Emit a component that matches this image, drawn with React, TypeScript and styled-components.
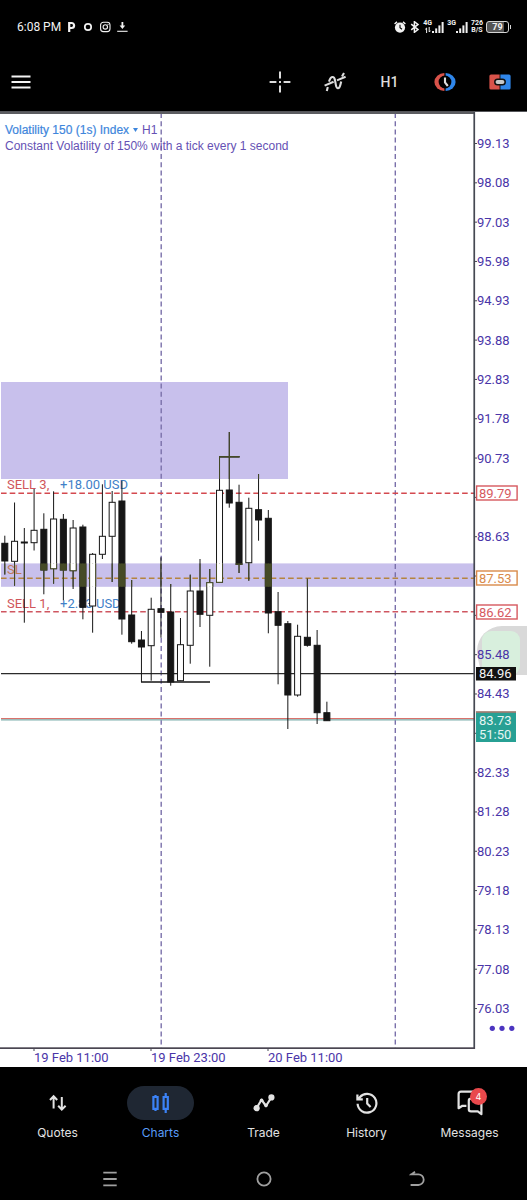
import React from "react";
import styled, { createGlobalStyle } from "styled-components";

const ui = `Inter, "Liberation Sans", sans-serif`;
const heading = `"Liberation Sans", Arial, sans-serif`;
const digits = `Roboto, "Liberation Sans", sans-serif`;
const violet = "#4a35a8";

const GlobalStyle = createGlobalStyle`
  *, *::before, *::after { box-sizing: border-box; }
  body { margin: 0; background: #000; font-family: ${ui}; }
  button { border: 0; padding: 0; margin: 0; background: none; color: inherit; font: inherit; cursor: pointer; }
  svg { display: block; }
`;

const Screen = styled.main`
  display: flex;
  flex-direction: column;
  width: 100%;
  min-height: 100vh;
  background: #000;
`;

const StatusBar = styled.header`
  display: flex;
  justify-content: space-between;
  align-items: center;
  height: 53px;
  padding: 0 18px 0 17px;
  color: #f2f2f2;
`;

const StatusGroup = styled.div<{ $gap: number }>`
  display: flex;
  align-items: center;
  gap: ${(p) => p.$gap}px;
`;

const Clock = styled.time`
  font: 400 12px/16px ${digits};
`;

const Network = styled.div`
  display: flex;
  align-items: flex-end;
`;

const TinyStack = styled.div`
  display: flex;
  flex-direction: column;
  align-items: center;
  font: 700 7px/7px ${digits};
`;

const Battery = styled.div`
  position: relative;
  display: flex;
  align-items: center;
  justify-content: center;
  width: 23px;
  height: 12px;
  border: 1px solid #d5d5d5;
  border-radius: 3px;
  background: linear-gradient(90deg, #555 79%, #000 79%);
  font: 700 9px/10px ${digits};
  &::after {
    content: "";
    position: absolute;
    right: -3px;
    top: 3px;
    width: 1px;
    height: 4px;
    background: #d5d5d5;
  }
`;

const Toolbar = styled.nav`
  display: flex;
  justify-content: space-between;
  height: 58px;
  color: #dcdcdc;
`;

const ToolGroup = styled.div`
  display: flex;
`;

const ToolButton = styled.button<{ $width: number }>`
  display: flex;
  align-items: center;
  justify-content: center;
  width: ${(p) => p.$width}px;
  height: 58px;
  font: 500 14px/18px ${digits};
`;

const ChartPanel = styled.section`
  position: relative;
  background: #fff;
`;

const ChartSvg = styled.svg`
  width: 100%;
  height: auto;
  font: 400 13px ${digits};
`;

const ChartHeading = styled.div`
  position: absolute;
  top: 11px;
  left: 5px;
  color: #6551b4;
  font: 400 12px/16px ${heading};
  white-space: nowrap;
`;

const HeadingRow = styled.div`
  display: flex;
  align-items: center;
  gap: 4px;
`;

const SymbolButton = styled.button`
  display: flex;
  align-items: center;
  gap: 4px;
  color: #3e86dc;
  -webkit-text-stroke: 0.2px currentColor;
`;

const TabBar = styled.nav`
  display: flex;
  padding: 19px 6px 0;
  height: 91px;
`;

const Tab = styled.button<{ $active?: boolean }>`
  flex: 1;
  display: flex;
  flex-direction: column;
  align-items: center;
  gap: 5px;
  height: 56px;
  color: ${(p) => (p.$active ? "#5a9cf8" : "#e2e2e2")};
  font-size: 12px;
  line-height: 16px;
`;

const Pill = styled.span<{ $active?: boolean }>`
  position: relative;
  display: flex;
  align-items: center;
  justify-content: center;
  width: 67px;
  height: 34px;
  border-radius: 17px;
  background: ${(p) => (p.$active ? "#1f2733" : "transparent")};
`;

const Badge = styled.span`
  position: absolute;
  top: 2px;
  right: 16px;
  width: 17px;
  height: 17px;
  border-radius: 50%;
  background: #e9494c;
  color: #fff;
  font-size: 9px;
  line-height: 17px;
  text-align: center;
`;

const SystemNav = styled.nav`
  display: flex;
  padding: 0 33px;
  height: 42px;
`;

const SystemButton = styled.button`
  flex: 1;
  display: flex;
  align-items: center;
  justify-content: center;
  color: #a0a0a0;
`;

type Candle = { high: number; top: number; bottom: number; low: number; up?: boolean };

const up = (high: number, top: number, bottom: number, low: number): Candle => ({ high, top, bottom, low, up: true });
const down = (high: number, top: number, bottom: number, low: number): Candle => ({ high, top, bottom, low });

const candles: Candle[] = [
  down(535.7, 543.3, 561, 574.5),
  up(502.5, 541.3, 561.3, 585.7),
  down(528, 542, 543, 622.7),
  up(489, 530.3, 542.7, 550.5),
  down(513.3, 529.3, 570, 594.3),
  up(491.3, 519, 568.7, 583.7),
  down(514, 519.3, 570, 600.3),
  up(520, 528, 570.7, 589),
  down(524.7, 527, 607.3, 619.3),
  up(553, 554.3, 606, 632.7),
  up(484.3, 536.3, 554.3, 559),
  up(491, 502.3, 536.3, 582),
  down(480.7, 501, 619, 634.7),
  down(580, 615, 641.7, 643.7),
  down(631, 640, 647, 682),
  up(597.7, 609.3, 645.7, 680.7),
  down(557.3, 608.7, 612.3, 637.7),
  down(584, 612, 682, 685.7),
  up(618, 644.7, 680.7, 681),
  up(574.7, 591, 645.3, 663.7),
  down(559, 591, 614.3, 627),
  up(569, 582.7, 615.3, 666.7),
  up(456.7, 490.3, 582.3, 582.3),
  down(432, 490, 503, 507.7),
  down(484.7, 502.3, 564.3, 573),
  up(497.7, 508.3, 562.7, 580.7),
  down(474, 509.7, 520, 540.7),
  down(510, 518.3, 613, 633.3),
  down(592, 611.7, 625.3, 684.3),
  down(621, 623.7, 695, 729),
  up(624.7, 636.3, 695, 696.7),
  down(578.7, 637.3, 645.3, 646.7),
  down(630, 645.3, 712.7, 724),
  down(701.7, 712.7, 720.7, 720.7),
];

const priceTicks = Array.from({ length: 23 }, (_, i) => ({
  label: (99.13 - i * 1.05).toFixed(2),
  y: 143.5 + i * 39.32,
}));

// Scale labels that sit behind an order or quote tag are left out.
const coveredLabels = new Set(["89.68", "87.58", "86.53", "83.38"]);

const timeTicks = [
  { x: 34, label: "19 Feb 11:00" },
  { x: 151, label: "19 Feb 23:00" },
  { x: 268, label: "20 Feb 11:00" },
];

const orderTags = [
  { y: 493, label: "89.79", color: "#d6595f" },
  { y: 578, label: "87.53", color: "#d98a4a" },
  { y: 612, label: "86.62", color: "#d6595f" },
];

function Candles({ ink }: { ink: string }) {
  return (
    <g stroke={ink}>
      {candles.map((c, i) => {
        const x = 4.8 + i * 9.76;
        return (
          <g key={i}>
            <line x1={x} x2={x} y1={c.high} y2={c.low} strokeWidth="1" />
            <rect
              x={x - 3}
              y={c.top}
              width="6"
              height={c.bottom - c.top}
              fill={c.up ? "#fff" : ink}
              strokeWidth="1"
            />
          </g>
        );
      })}
      <path d="M141 682H210M219 456.7H239.6" strokeWidth="1.6" />
    </g>
  );
}

function Chart() {
  return (
    <ChartSvg viewBox="0 111 527 956" role="img" aria-label="Volatility 150 (1s) Index candlestick chart">
      <defs>
        <clipPath id="zones">
          <rect x="1" y="382" width="287" height="97" />
          <rect x="1" y="563.4" width="473" height="23.4" />
        </clipPath>
      </defs>
      <rect x="1" y="382" width="287" height="97" fill="#c8c0ec" />
      <rect x="1" y="563.4" width="473" height="23.4" fill="#c8c0ec" />

      <g stroke="#7a70aa" strokeWidth="1.4" strokeDasharray="5 3.2">
        <line x1="161.2" x2="161.2" y1="113" y2="1048" />
        <line x1="395.3" x2="395.3" y1="113" y2="1048" />
      </g>

      <g strokeWidth="1.5" strokeDasharray="5.6 3.1">
        <line x1="1" x2="474" y1="493.3" y2="493.3" stroke="#d4494f" />
        <line x1="1" x2="474" y1="578.2" y2="578.2" stroke="#b5843f" />
        <line x1="1" x2="474" y1="611.8" y2="611.8" stroke="#cf5660" />
      </g>
      <line x1="1" x2="474" y1="673.6" y2="673.6" stroke="#2b2b2b" strokeWidth="1.2" />
      <line x1="1" x2="474" y1="718.6" y2="718.6" stroke="#d9726c" strokeWidth="1.3" />
      <line x1="1" x2="474" y1="719.9" y2="719.9" stroke="#7fb0ae" strokeWidth="1.3" />

      <g fill="#d0565a">
        <text x="7" y="489">SELL 3,</text>
        <text x="7" y="574" fill="#c07a55">SL</text>
        <text x="7" y="608">SELL 1,</text>
      </g>
      <g fill="#3f80c8">
        <text x="60" y="489">+18.00 USD</text>
        <text x="60" y="608">+2.83 USD</text>
      </g>

      <Candles ink="#161616" />
      <g clipPath="url(#zones)">
        <Candles ink="#454a26" />
      </g>

      <path d="M527 626H502A25 25 0 0 0 477 651Q478 666 484 675H527Z" fill="#d9d9d9" />
      <rect x="482" y="631" width="38" height="44" rx="9" fill="#d8efdd" />

      <rect x="0" y="111" width="527" height="1" fill="#55565a" />
      <rect x="0" y="112" width="475" height="2" fill="#5c5d61" />
      <rect x="473.4" y="112" width="1.7" height="937" fill="#454852" />
      <rect x="0" y="1047.3" width="475" height="1.7" fill="#4a4652" />

      <g fill={violet}>
        {priceTicks.map((t) => (
          <g key={t.label}>
            <rect x="475" y={t.y - 0.5} width="2" height="1" fill="#454852" />
            {!coveredLabels.has(t.label) && <text x="477" y={t.y + 4.5}>{t.label}</text>}
          </g>
        ))}
        {timeTicks.map((t) => (
          <g key={t.x}>
            <rect x={t.x - 0.5} y="1049" width="1" height="2" fill="#454852" />
            <text x={t.x} y="1061.5">{t.label}</text>
          </g>
        ))}
        <g fill="#4c35c0">
          <circle cx="492.3" cy="1028.3" r="2.6" />
          <circle cx="502" cy="1028.3" r="2.6" />
          <circle cx="511.8" cy="1028.3" r="2.6" />
        </g>
      </g>

      {orderTags.map((t) => (
        <g key={t.label}>
          <rect x="476.6" y={t.y - 7} width="40.5" height="14" fill="#fff" stroke={t.color} strokeWidth="1.4" />
          <text x="479" y={t.y + 4.6} fill={t.color}>{t.label}</text>
        </g>
      ))}
      <rect x="476" y="667" width="40" height="13.5" fill="#111" />
      <text x="479" y="678" fill="#f4f4f4">84.96</text>
      <rect x="476" y="711.4" width="40" height="30.6" fill="#27a094" />
      <rect x="476" y="711.4" width="40" height="1.2" fill="#cf6f66" />
      <text x="479" y="724.5" fill="#e6f5f3">83.73</text>
      <text x="479" y="739" fill="#e6f5f3">51:50</text>
    </ChartSvg>
  );
}

function SignalBars() {
  return (
    <svg width="12" height="12" viewBox="0 0 12 12" fill="#f0f0f0" aria-hidden="true">
      <rect x="0" y="10" width="2" height="2" />
      <rect x="3.2" y="7.4" width="2" height="4.6" />
      <rect x="6.4" y="4.4" width="2" height="7.6" />
      <rect x="9.6" y="1" width="2" height="11" />
    </svg>
  );
}

const QuotesIcon = () => (
  <svg width="20" height="20" viewBox="0 0 20 20" fill="none" stroke="currentColor" strokeWidth="2">
    <path d="M5.6 15.4V3.2M2 7 5.6 3.2 9.2 7M13.8 4V16.4M10.2 12.8 13.8 16.6 17.6 12.8" />
  </svg>
);

const ChartsIcon = () => (
  <svg width="20" height="22" viewBox="0 0 20 22" fill="none" stroke="#3b82f6" strokeWidth="2.2">
    <path d="M2.4 5H6.6V16.8H2.4ZM4.5 3V5M4.5 16.8V19M12.6 5H16.8V16.8H12.6ZM14.7 1V5M14.7 16.8V21" />
  </svg>
);

const TradeIcon = () => (
  <svg width="22" height="22" viewBox="0 0 22 22" fill="none" stroke="currentColor" strokeWidth="2.2" strokeLinejoin="round">
    <path d="M3.6 16 8.6 7.8 13 14 18 6" />
    <g fill="currentColor" stroke="none">
      <circle cx="3.6" cy="16.2" r="3.1" />
      <circle cx="8.6" cy="8.2" r="1.8" />
      <circle cx="13" cy="13.4" r="1.8" />
      <circle cx="18.4" cy="5.4" r="3.1" />
    </g>
  </svg>
);

const HistoryIcon = () => (
  <svg width="22" height="22" viewBox="0 0 22 22" fill="none" stroke="currentColor" strokeWidth="2.2">
    <path d="M1.6 11.8A9.4 9.4 0 1 0 3.8 5.2L1.8 7M1.4 2.4V7.4H6.8M11.2 6V11.6L14.6 15" />
  </svg>
);

const MessagesIcon = () => (
  <svg width="26" height="26" viewBox="0 0 26 26" fill="none" stroke="currentColor" strokeWidth="2.2" strokeLinejoin="round">
    <path d="M9.4 15.8H5.4L1.6 18.2V4Q1.6 1.6 4 1.6H15.8Q18.2 1.6 18.2 4V8.4" />
    <path d="M14 8.6H22.2Q24.4 8.6 24.4 10.8V24.2L20.8 21.4H14Q11.8 21.4 11.8 19.2V10.8Q11.8 8.6 14 8.6Z" />
  </svg>
);

const tabs = [
  { label: "Quotes", Icon: QuotesIcon },
  { label: "Charts", Icon: ChartsIcon, active: true },
  { label: "Trade", Icon: TradeIcon },
  { label: "History", Icon: HistoryIcon },
  { label: "Messages", Icon: MessagesIcon, badge: 4 },
];

export default function App() {
  return (
    <Screen>
      <GlobalStyle />
      <StatusBar>
        <StatusGroup $gap={6}>
          <Clock>6:08 PM</Clock>
          <svg width="62" height="12" viewBox="0 0 62 12" fill="none" stroke="#f2f2f2" aria-hidden="true">
            <path d="M2.2 11V2H4.6A2.5 2.5 0 0 1 4.6 7H2.2" strokeWidth="2.2" />
            <circle cx="21" cy="6" r="3.2" strokeWidth="1.7" />
            <rect x="33.6" y="1.2" width="9.4" height="9.4" rx="2.8" strokeWidth="1.1" />
            <circle cx="38.3" cy="5.9" r="2.2" strokeWidth="1.1" />
            <circle cx="41" cy="3.3" r="0.6" fill="#f2f2f2" stroke="none" />
            <path d="M55.4 1V5" strokeWidth="1.8" />
            <path d="M52.6 4.4H58.2L55.4 8Z" fill="#f2f2f2" stroke="none" />
            <path d="M50.2 10.3H60.6" strokeWidth="1.1" />
          </svg>
        </StatusGroup>
        <StatusGroup $gap={3}>
          <svg width="26" height="12" viewBox="0 0 26 12" fill="none" stroke="#f2f2f2" aria-hidden="true">
            <circle cx="6" cy="6.6" r="5.1" fill="#f2f2f2" stroke="none" />
            <path d="M0.6 3 3 0.9M9 0.9 11.4 3" strokeWidth="1.5" />
            <path d="M6 3.8V6.8L8 8.2" stroke="#000" strokeWidth="1.1" />
            <path d="M17.2 3.2 24 8.6 20.4 11.3V0.7L24 3.4 17.2 8.8" strokeWidth="1.5" />
          </svg>
          <Network>
            <TinyStack>
              <span>4G</span>
              <svg width="6" height="6" viewBox="0 0 6 6" fill="none" stroke="#f0f0f0" strokeWidth="1">
                <path d="M1.6 6V1L0.2 2.4M4.2 0V5L5.6 3.6" />
              </svg>
            </TinyStack>
            <SignalBars />
          </Network>
          <Network>
            <TinyStack>
              <span>3G</span>
              <svg width="6" height="6" viewBox="0 0 6 6" aria-hidden="true" />
            </TinyStack>
            <SignalBars />
          </Network>
          <TinyStack>
            <span>726</span>
            <span>B/S</span>
          </TinyStack>
          <Battery>79</Battery>
        </StatusGroup>
      </StatusBar>

      <Toolbar aria-label="Chart tools">
        <ToolButton $width={42} aria-label="Menu">
          <svg width="20" height="16" viewBox="0 0 20 16" stroke="#f4f4f4" strokeWidth="2">
            <path d="M0.5 2.4H19.5M0.5 8H19.5M0.5 13.6H19.5" />
          </svg>
        </ToolButton>
        <ToolGroup>
          <ToolButton $width={55} aria-label="Crosshair">
            <svg width="22" height="22" viewBox="0 0 22 22" stroke="currentColor" strokeWidth="2">
              <path d="M11 0.6V7.4M11 14.6V21.4M0.6 11H7.4M14.6 11H21.4M10 11H12" />
            </svg>
          </ToolButton>
          <ToolButton $width={55} aria-label="Indicators">
            <svg width="22" height="20" viewBox="0 0 22 20" fill="none" stroke="currentColor" strokeWidth="2.1">
              <path d="M0.6 13.6 9.6 9.8M13 8.4 21.6 4.8" />
              <path d="M2.8 19 3.8 15M5 9.6Q6.4 5 8.6 5Q10.4 5 11 8.2L11.8 12.6Q12.4 16.2 14 16.2Q15.6 16.2 16.4 12.8L17.2 9.4M18 4.6 20 1" />
            </svg>
          </ToolButton>
          <ToolButton $width={55}>H1</ToolButton>
          <ToolButton $width={55} aria-label="Pending order">
            <svg width="22" height="18" viewBox="0 0 22 18" fill="none">
              <path d="M10.4 0A10 9 0 0 0 10.4 18Z" fill="#d9534a" />
              <path d="M11.6 0A10 9 0 0 1 11.6 18Z" fill="#2f86ea" />
              <circle cx="11" cy="9" r="6.4" fill="#000" />
              <path d="M11 4.4V9.4L13.8 13" stroke="#dcdcdc" strokeWidth="2.1" />
            </svg>
          </ToolButton>
          <ToolButton $width={55} aria-label="One-click trading">
            <svg width="22" height="16" viewBox="0 0 22 16">
              <path d="M2 0.4H10.6V15.6H2Q0.4 15.6 0.4 14V2Q0.4 0.4 2 0.4Z" fill="#d9534a" />
              <path d="M11.4 0.4H20Q21.6 0.4 21.6 2V14Q21.6 15.6 20 15.6H11.4Z" fill="#2f86ea" />
              <rect x="5.8" y="5.2" width="10.4" height="5.6" rx="2.8" fill="#c9c9c9" stroke="#111" strokeWidth="1.5" />
            </svg>
          </ToolButton>
        </ToolGroup>
      </Toolbar>

      <ChartPanel>
        <Chart />
        <ChartHeading>
          <HeadingRow>
            <SymbolButton>
              Volatility 150 (1s) Index
              <svg width="5" height="4" viewBox="0 0 5 4" fill="currentColor" aria-hidden="true">
                <path d="M0 0H5L2.5 4Z" />
              </svg>
            </SymbolButton>
            <span>H1</span>
          </HeadingRow>
          <div>Constant Volatility of 150% with a tick every 1 second</div>
        </ChartHeading>
      </ChartPanel>

      <TabBar aria-label="Main">
        {tabs.map(({ label, Icon, active, badge }) => (
          <Tab key={label} $active={active} aria-current={active ? "page" : undefined}>
            <Pill $active={active}>
              <Icon />
              {badge && <Badge>{badge}</Badge>}
            </Pill>
            {label}
          </Tab>
        ))}
      </TabBar>

      <SystemNav aria-label="System">
        <SystemButton aria-label="Recent apps">
          <svg width="14" height="16" viewBox="0 0 14 16" stroke="currentColor" strokeWidth="1.8">
            <path d="M0.3 1.6H13.7M0.3 8H13.7M0.3 14.4H13.7" />
          </svg>
        </SystemButton>
        <SystemButton aria-label="Home">
          <svg width="16" height="16" viewBox="0 0 16 16" fill="none" stroke="currentColor" strokeWidth="1.8">
            <circle cx="8" cy="8" r="6.6" />
          </svg>
        </SystemButton>
        <SystemButton aria-label="Back">
          <svg width="16" height="16" viewBox="0 0 16 16" fill="none" stroke="currentColor" strokeWidth="1.8">
            <path d="M6 0.8 2.4 3.4H9.4A5.3 5.3 0 0 1 9.4 14H1.6M1.4 3.4H5.4" />
          </svg>
        </SystemButton>
      </SystemNav>
    </Screen>
  );
}
